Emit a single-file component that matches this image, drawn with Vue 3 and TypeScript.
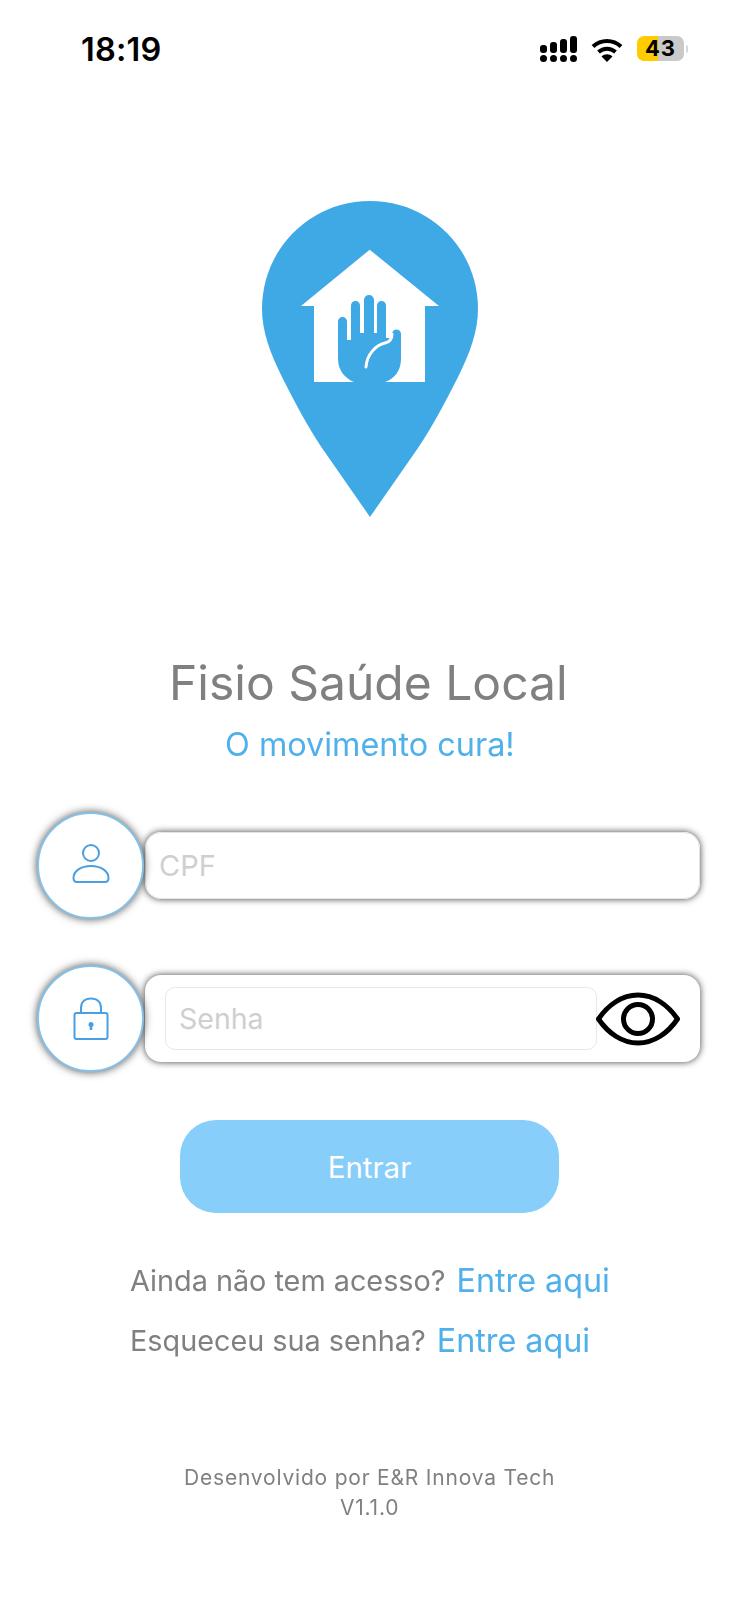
<script setup lang="ts">
const title: string = 'Fisio Saúde Local'
const links: { text: string; link: string }[] = [
  { text: 'Ainda não tem acesso?', link: 'Entre aqui' },
  { text: 'Esqueceu sua senha?', link: 'Entre aqui' },
]
</script>

<template>
  <main class="page">
    <header class="status">
      <span class="time">18:19</span>
      <div class="status-icons">
        <svg class="signal" width="37" height="27" viewBox="0 0 37 27">
          <g fill="#000">
            <rect x="0" y="9" width="7" height="8" rx="3" />
            <rect x="10" y="6" width="7" height="11" rx="3" />
            <rect x="20" y="3" width="7" height="14" rx="3" />
            <rect x="30" y="0" width="7" height="17" rx="3" />
            <rect x="0" y="19" width="7" height="7" rx="3.5" />
            <rect x="10" y="19" width="7" height="7" rx="3.5" />
            <rect x="20" y="19" width="7" height="7" rx="3.5" />
            <rect x="30" y="19" width="7" height="7" rx="3.5" />
          </g>
        </svg>
        <svg class="wifi" width="32" height="24" viewBox="0 0 32 24">
          <g fill="none" stroke="#000" stroke-width="4">
            <path d="M2 8.5C10 1 22 1 30 8.5" />
            <path d="M7.5 14C12.5 9.5 19.5 9.5 24.5 14" />
          </g>
          <path d="M16 24L10.5 18.5C13.5 15.5 18.5 15.5 21.5 18.5Z" fill="#000" />
        </svg>
        <div class="battery"><span class="battery-num">43</span></div>
        <span class="battery-tip"></span>
      </div>
    </header>

    <svg class="logo" width="216" height="316" viewBox="0 0 216 316">
      <path
        fill="#3fa9e6"
        d="M108 0C48 0 0 48 0 108C0 130 8 152 20 176C32 200 46 226 60 247L108 316L156 247C170 226 184 200 196 176C208 152 216 130 216 108C216 48 168 0 108 0Z"
      />
      <path fill="#fff" d="M107.700 48.700L177 105H163V181H52V105H39Z" />
      <path
        fill="#3fa9e6"
        d="M76 120.500a4.500 4.500 0 0 1 9 0V139H89V104.500a4.500 4.500 0 0 1 9 0V132H102V99a5 5 0 0 1 10 0V132H115V104.500a4.500 4.500 0 0 1 9 0V137H130V133a4.500 4.500 0 0 1 9 0V158C139 170 132 178 123 181V190H92V181C84 178 76 170 76 158Z"
      />
      <path fill="none" stroke="#fff" stroke-width="3" stroke-linecap="round" d="M104 166C105 153 114 144 123 142C128 141 130 138 130 133" />
    </svg>

    <h1 class="title">{{ title }}</h1>
    <p class="subtitle">O movimento cura!</p>

    <form class="form" @submit.prevent>
      <div class="row">
        <div class="circle">
          <svg class="icon-person" width="38" height="40" viewBox="0 0 38 40" fill="none" stroke="#4a9fe3" stroke-width="2">
            <circle cx="19" cy="9" r="8" />
            <path d="M1.500 34C1.500 27 9 22 19 22C29 22 36.500 27 36.500 34C36.500 37 35 38 33 38H5C3 38 1.500 37 1.500 34Z" />
          </svg>
        </div>
        <div class="card card-cpf">
          <input class="field field-cpf" type="text" placeholder="CPF" />
        </div>
      </div>
      <div class="row">
        <div class="circle">
          <svg class="icon-lock" width="36" height="44" viewBox="0 0 36 44" fill="none" stroke="#4a9fe3" stroke-width="2">
            <path d="M8 16V11C8 5 12 1.500 18 1.500C24 1.500 28 5 28 11V16" />
            <rect x="1.500" y="16" width="33" height="26" rx="2" />
            <circle cx="18" cy="27.500" r="2.500" fill="#4a9fe3" stroke="none" />
            <path d="M18 28V33" stroke-width="2.500" />
          </svg>
        </div>
        <div class="card card-pass">
          <input class="field field-pass" type="password" placeholder="Senha" />
          <svg class="eye" width="84" height="54" viewBox="0 0 84 54" fill="none" stroke="#000" stroke-width="5">
            <path d="M2.500 27C12 13 26 3 42 3C58 3 72 13 81.500 27C72 41 58 51 42 51C26 51 12 41 2.500 27Z" stroke-linejoin="round" />
            <circle cx="42" cy="27" r="14.500" />
          </svg>
        </div>
      </div>
      <button class="submit" type="submit">Entrar</button>
    </form>

    <div class="links">
      <p v-for="row in links" :key="row.text" class="link-row">
        <span class="link-text">{{ row.text }}</span>
        <a class="link">{{ row.link }}</a>
      </p>
    </div>

    <footer class="footer">
      <div>Desenvolvido por E&amp;R Innova Tech</div>
      <div>V1.1.0</div>
    </footer>
  </main>
</template>

<style>
html, body { margin: 0; background: #fff; }
</style>

<style scoped>
.page {
  width: 739px;
  height: 1600px;
  display: flex;
  flex-direction: column;
  align-items: center;
  background: #fff;
  font-family: Inter, "Liberation Sans", sans-serif;
  overflow: hidden;
  box-sizing: border-box;
}
.status {
  width: 100%;
  height: 100px;
  flex: none;
  box-sizing: border-box;
  padding: 31px 51px 0 81px;
  display: flex;
  justify-content: space-between;
  align-items: flex-start;
}
.time {
  font-size: 32.5px;
  font-weight: 600;
  line-height: 38px;
  letter-spacing: 0.2px;
  color: #000;
}
.status-icons {
  display: flex;
  align-items: flex-start;
  padding-top: 5px;
}
.signal { margin-right: 14px; }
.wifi { margin-top: 2px; margin-right: 14px; }
.battery {
  width: 47px;
  height: 25px;
  border-radius: 7px;
  background: linear-gradient(90deg, #ffcc00 0 21px, #c9c9c9 21px);
  display: flex;
  align-items: center;
  justify-content: center;
}
.battery-num {
  font-size: 22px;
  font-weight: 700;
  letter-spacing: 1px;
  line-height: 25px;
  color: #000;
}
.battery-tip {
  width: 2px;
  height: 8px;
  margin: 9px 0 0 2px;
  border-radius: 0 2px 2px 0;
  background: #d8d8d8;
}
.logo {
  flex: none;
  margin-top: 101px;
}
.title {
  margin: 138px 2px 0 0;
  font-size: 48px;
  font-weight: 400;
  line-height: 56px;
  color: #808080;
  will-change: transform;
}
.subtitle {
  margin: 14px 0 0;
  font-size: 32.4px;
  line-height: 40px;
  color: #4fb0ea;
  will-change: transform;
}
.form {
  width: 100%;
  margin-top: 47px;
  display: flex;
  flex-direction: column;
  align-items: center;
}
.row {
  align-self: stretch;
  display: flex;
  align-items: center;
  height: 107px;
  padding-left: 37px;
  margin-bottom: 46px;
}
.row:last-of-type { margin-bottom: 48px; }
.circle {
  width: 107px;
  height: 107px;
  flex: none;
  box-sizing: border-box;
  border: 2px solid #85c1e9;
  border-radius: 50%;
  background: #fff;
  box-shadow: 0 0 8px rgba(0, 0, 0, 0.7);
  display: flex;
  align-items: center;
  justify-content: center;
  position: relative;
  z-index: 1;
}
.icon-person { margin: 0 0 4px 1px; }
.card {
  width: 555px;
  margin-left: 1px;
  box-sizing: border-box;
  border-radius: 16px;
  background: #fff;
  box-shadow: 0 0 7px rgba(0, 0, 0, 0.75);
  display: flex;
  align-items: center;
}
.card-cpf { height: 67px; }
.card-pass { height: 87px; padding-left: 20px; }
.field {
  box-sizing: border-box;
  font-family: inherit;
  background: #fff;
  outline: none;
  color: #333;
}
.field::placeholder { color: #cfcfcf; opacity: 1; }
.field-cpf {
  width: 100%;
  height: 100%;
  border: 1px solid #e4e4e4;
  border-radius: 16px;
  padding: 0 0 0 13px;
  font-size: 29px;
}
.field-pass {
  width: 432px;
  height: 63px;
  flex: none;
  border: 1px solid #e8e8e8;
  border-radius: 10px;
  padding: 0 0 0 13px;
  font-size: 28.5px;
}
.eye { flex: none; margin-left: -1px; }
.submit {
  width: 379px;
  height: 93px;
  border: none;
  border-radius: 36px;
  background: #87cefa;
  color: #fff;
  font-family: inherit;
  font-size: 29.5px;
}
.links {
  align-self: stretch;
  margin-top: 47px;
  padding-left: 130px;
  display: flex;
  flex-direction: column;
  gap: 20px;
  will-change: transform;
}
.link-row {
  margin: 0;
  height: 40px;
  display: flex;
  align-items: center;
  gap: 11px;
}
.link-text { font-size: 28.8px; color: #808080; }
.link { font-size: 32.3px; color: #4fb0ea; }
.footer {
  margin-top: 103px;
  text-align: center;
  font-size: 21px;
  line-height: 30px;
  letter-spacing: 0.8px;
  color: #808080;
  will-change: transform;
}
</style>
